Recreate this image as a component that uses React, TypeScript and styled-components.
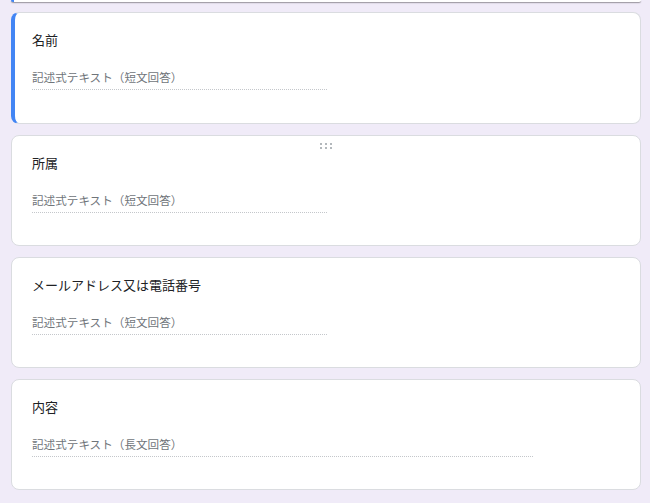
import React from "react";
import styled, { createGlobalStyle } from "styled-components";

const GlobalStyle = createGlobalStyle`
	html, body {
		margin: 0;
		padding: 0;
		background: #f0ebf8;
	}
	body {
		font-family: "Noto Sans CJK JP", "Noto Sans", "Liberation Sans", sans-serif;
	}
`;

type Question = {
	id: number;
	title: string;
	placeholder: string;
	long?: boolean;
};

const questions: Question[] = [
	{ id: 1, title: "名前", placeholder: "記述式テキスト（短文回答）" },
	{ id: 2, title: "所属", placeholder: "記述式テキスト（短文回答）" },
	{ id: 3, title: "メールアドレス又は電話番号", placeholder: "記述式テキスト（短文回答）" },
	{ id: 4, title: "内容", placeholder: "記述式テキスト（長文回答）", long: true },
];

const Page = styled.div`
	display: flex;
	flex-direction: column;
	gap: 11px;
	padding: 0 9px 12px 11px;
`;

/* bas de la carte précédente, coupée par le haut de la fenêtre */
const CardTail = styled.div`
	height: 2px;
	margin-bottom: -1px;
	background: #fff;
	border-radius: 0 0 8px 8px;
	border-left: 3px solid #4285f4;
	box-shadow: 0 1px 1px rgba(0, 0, 0, 0.28), 0 1px 2px rgba(0, 0, 0, 0.12);
`;

const Card = styled.div<{ $active?: boolean }>`
	position: relative;
	box-sizing: border-box;
	height: 111px;
	background: #fff;
	border: 1px solid #dadce0;
	border-radius: 8px;
	padding: 17px 20px 0 20px;
	${(p) =>
		p.$active &&
		`
		border-left: 4px solid #4285f4;
		padding-left: 17px;
		height: 112px;
	`}
`;

const DragHandle = styled.div`
	position: absolute;
	top: 7px;
	left: 50%;
	transform: translateX(-50%);
	display: grid;
	grid-template-columns: repeat(3, 2px);
	grid-auto-rows: 2px;
	gap: 2px 3px;

	span {
		background: #9aa0a6;
		border-radius: 50%;
	}
`;

const Title = styled.div`
	font-size: 13px;
	line-height: 20px;
	color: #202124;
`;

const Answer = styled.div<{ $long?: boolean }>`
	margin-top: 18px;
	width: ${(p) => (p.$long ? "501px" : "295px")};
	font-size: 11.6px;
	line-height: 18px;
	color: #70757a;
	padding-bottom: 3px;
	border-bottom: 1px dotted #c4c7cb;
`;

const App: React.FC = () => {
	return (
		<>
			<GlobalStyle />
			<Page>
				<CardTail />
				{questions.map((q) => (
					<Card key={q.id} $active={q.id === 1}>
						{q.id === 2 && (
							<DragHandle>
								{Array.from({ length: 6 }).map((_, i) => (
									<span key={i} />
								))}
							</DragHandle>
						)}
						<Title>{q.title}</Title>
						<Answer $long={q.long}>{q.placeholder}</Answer>
					</Card>
				))}
			</Page>
		</>
	);
};

export default App;
